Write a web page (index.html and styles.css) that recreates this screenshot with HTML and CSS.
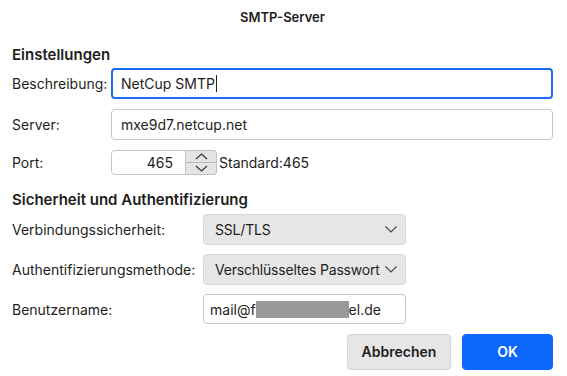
FILE: index.html
```html
<!DOCTYPE html>
<html>
<head>
<meta charset="utf-8">
<title>SMTP-Server</title>
<link rel="stylesheet" href="styles.css">
</head>
<body>
<div class="dialog">
	<div class="title">SMTP-Server</div>

	<div class="section">Einstellungen</div>
	<div class="grid grid-main">
		<div class="label">Beschreibung:</div>
		<div class="field focused">NetCup SMTP<span class="caret"></span></div>

		<div class="label">Server:</div>
		<div class="field">mxe9d7.netcup.net</div>

		<div class="label">Port:</div>
		<div class="port-row">
			<div class="field port">465</div>
			<div class="spinner">
				<div class="spin-btn">
					<svg width="13" height="7" viewBox="0 0 13 7"><polyline points="1,6 6.5,1 12,6" fill="none" stroke="#333" stroke-width="1.1"/></svg>
				</div>
				<div class="spin-btn">
					<svg width="13" height="7" viewBox="0 0 13 7"><polyline points="1,1 6.5,6 12,1" fill="none" stroke="#333" stroke-width="1.1"/></svg>
				</div>
			</div>
			<span class="hint">Standard:465</span>
		</div>
	</div>

	<div class="section section-2">Sicherheit und Authentifizierung</div>
	<div class="grid grid-sec">
		<div class="label">Verbindungssicherheit:</div>
		<div class="select">
			<span class="select-text">SSL/TLS</span>
			<svg width="12" height="7" viewBox="0 0 12 7"><polyline points="0.5,0.5 6,6 11.5,0.5" fill="none" stroke="#444" stroke-width="1.1"/></svg>
		</div>

		<div class="label">Authentifizierungsmethode:</div>
		<div class="select">
			<span class="select-text">Verschlüsseltes Passwort</span>
			<svg width="12" height="7" viewBox="0 0 12 7"><polyline points="0.5,0.5 6,6 11.5,0.5" fill="none" stroke="#444" stroke-width="1.1"/></svg>
		</div>

		<div class="label">Benutzername:</div>
		<div class="field user">mail@f<span class="redact"></span>el.de</div>
	</div>

	<div class="buttons">
		<div class="btn">Abbrechen</div>
		<div class="btn btn-ok">OK</div>
	</div>
</div>
</body>
</html>
```

FILE: styles.css
```css
*{margin:0; padding:0; box-sizing:border-box;}
body{background:#fff; font-family:Inter, "Liberation Sans", Arial, sans-serif; font-size:14px; color:#1e1e1e;}
.dialog{width:567px; height:376px; padding:0 14px 0 12px;}
.title{height:34px; line-height:34px; text-align:center; font-weight:600; font-size:13px;}
.section{margin-top:11px; height:20px; line-height:20px; font-size:15px; font-weight:600;}
.section-2{margin-top:15px;}
.grid{display:grid; align-items:center;}
.grid-main{margin-top:3px; grid-template-columns:99px 1fr; grid-template-rows:31px 31px 25px; row-gap:10px;}
.grid-sec{margin-top:4px; grid-template-columns:191px 203px; grid-template-rows:31px 31px 30px; row-gap:9px;}
.field{height:100%; border:1px solid #c6c6c6; border-radius:4px; padding:0 9px; display:flex; align-items:center; background:#fff; white-space:nowrap;}
.focused{border:2px solid #1b6ef3; padding:0 8px;}
.caret{display:inline-block; width:1px; height:17px; background:#222; margin-left:1px;}
.port-row{display:flex; align-items:center; height:25px;}
.port{width:75px; justify-content:flex-end; padding-right:12px; border-radius:4px 0 0 4px;}
.spinner{width:31px; height:25px; border:1px solid #c0c0c0; border-left:none; border-radius:0 4px 4px 0; background:#e4e4e4; display:flex; flex-direction:column;}
.spin-btn{flex:1; display:flex; align-items:center; justify-content:center;}
.spin-btn:first-child{border-bottom:1px solid #b8b8b8;}
.hint{margin-left:2px;}
.select{height:100%; border:1px solid #d6d6d6; border-radius:4px; background:#e6e6e6; display:flex; align-items:center; padding:0 8px 0 11px; white-space:nowrap;}
.select-text{flex:1; min-width:0; letter-spacing:-0.2px;}
.select svg{flex:none; margin-left:3px;}
.user{padding:0 6px;}
.redact{display:inline-block; width:93px; height:17px; background:#999;}
.buttons{margin-top:10px; display:flex; justify-content:flex-end; gap:11px;}
.btn{width:104px; height:36px; line-height:34px; text-align:center; font-weight:600; font-size:14px; border:1px solid #d4d4d4; border-radius:4px; background:#e6e6e6;}
.btn-ok{width:91px; background:#0b68fb; border-color:#0b68fb; color:#fff;}
```
